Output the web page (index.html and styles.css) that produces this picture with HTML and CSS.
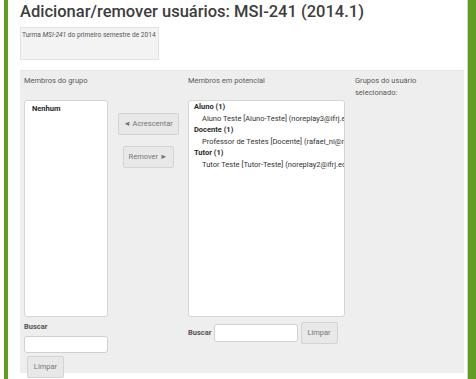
FILE: index.html
```html
<!DOCTYPE html>
<html lang="pt">
<head>
<meta charset="utf-8">
<title>Adicionar/remover usuários</title>
<link rel="stylesheet" href="styles.css">
</head>
<body>
<div class="frame">
  <div class="main">
    <h2 class="title">Adicionar/remover usuários: MSI-241 (2014.1)</h2>
    <div class="desc">Turma <i>MSI-241</i> do primeiro semestre de 2014</div>
    <div class="panel">
      <div class="col col-members">
        <div class="head">Membros do grupo</div>
        <div class="list list-left">
          <div class="group">Nenhum</div>
        </div>
        <div class="search-label">Buscar</div>
        <input class="input input-left" type="text">
        <div><button class="btn btn-clear-left">Limpar</button></div>
      </div>
      <div class="col col-buttons">
        <button class="btn btn-add">&#9668; Acrescentar</button>
        <button class="btn btn-remove">Remover &#9658;</button>
      </div>
      <div class="col col-potential">
        <div class="head">Membros em potencial</div>
        <div class="list list-right">
          <div class="group">Aluno (1)</div>
          <div class="opt">Aluno Teste [Aluno-Teste] (noreplay3@ifrj.edu.br)</div>
          <div class="group">Docente (1)</div>
          <div class="opt">Professor de Testes [Docente] (rafael_ni@msn.com)</div>
          <div class="group">Tutor (1)</div>
          <div class="opt">Tutor Teste [Tutor-Teste] (noreplay2@ifrj.edu.br)</div>
        </div>
        <div class="search-row">
          <span class="search-label inline">Buscar</span>
          <input class="input input-right" type="text">
          <button class="btn btn-clear-right">Limpar</button>
        </div>
      </div>
      <div class="col col-groups">
        <div class="head">Grupos do usuário selecionado:</div>
      </div>
    </div>
  </div>
</div>
</body>
</html>
```

FILE: styles.css
```css
html, body {
  margin: 0;
  padding: 0;
  background: #ffffff;
}
body {
  width: 476px;
  height: 379px;
  overflow: hidden;
  font-family: Roboto, "Noto Sans", sans-serif;
  color: #333;
}
.frame {
  margin-left: 4px;
  border-left: 4px solid #5f9e1e;
  border-right: 8px solid #5f9e1e;
  height: 379px;
  box-sizing: border-box;
}
.main {
  height: 100%;
  box-sizing: border-box;
  padding-left: 12px;
  padding-right: 3px;
  border-right: 1px solid #c9cfdc;
}
.title {
  margin: 0;
  padding-top: 2px;
  font-size: 16.5px;
  font-weight: 500;
  line-height: 20px;
  color: #3d3d3d;
  white-space: nowrap;
}
.desc {
  margin-top: 5px;
  width: 139px;
  height: 33px;
  box-sizing: border-box;
  background: #f3f3f3;
  border: 1px solid #e2e2e2;
  padding: 3px 1px;
  font-size: 6.6px;
  line-height: 9px;
  color: #555;
  white-space: nowrap;
}
.panel {
  margin-top: 10px;
  height: 303px;
  box-sizing: border-box;
  background: #eeeeee;
  border-top: 1px solid #e6e6e6;
  padding: 4px 0 0 4px;
  display: flex;
  align-items: flex-start;
}
.col {
  display: flex;
  flex-direction: column;
}
.head {
  font-size: 7.5px;
  line-height: 12px;
  height: 24px;
  margin-bottom: 1px;
  color: #5a5a5a;
}
.col-members {
  width: 84px;
}
.col-buttons {
  width: 80px;
  align-items: center;
  padding-top: 38px;
  gap: 11px;
}
.col-potential {
  width: 157px;
}
.col-groups {
  margin-left: 10px;
  width: 100px;
}
.list {
  height: 217px;
  box-sizing: border-box;
  background: #ffffff;
  border: 1px solid #d6d6d6;
  border-radius: 3px;
  overflow: hidden;
  font-size: 7.5px;
  line-height: 11.5px;
  white-space: nowrap;
}
.list-left {
  padding: 2px 7px;
}
.list-right {
  padding: 0 5px;
}
.group {
  font-weight: 700;
  color: #2a2a2a;
}
.opt {
  padding-left: 8px;
  color: #333;
}
.btn {
  font-family: Roboto, "Noto Sans", sans-serif;
  font-size: 7.5px;
  color: #777;
  background: #e8e8e8;
  border: 1px solid #d4d4d4;
  border-radius: 2px;
  padding: 0;
  height: 22px;
  box-sizing: border-box;
  line-height: 20px;
}
.btn-add {
  width: 61px;
}
.btn-remove {
  width: 51px;
}
.search-label {
  font-size: 7.5px;
  font-weight: 700;
  color: #555;
  line-height: 10px;
  margin-top: 5px;
}
.search-label.inline {
  margin-top: 0;
  margin-right: 2px;
}
.input {
  width: 84px;
  height: 17px;
  box-sizing: border-box;
  background: #fff;
  border: 1px solid #d0d0d0;
  border-radius: 3px;
  margin: 4px 0 0 0;
  padding: 0;
}
.btn-clear-left {
  width: 37px;
  margin: 3px 0 0 3px;
}
.search-row {
  display: flex;
  align-items: center;
  margin-top: 5px;
}
.input-right {
  height: 18px;
  margin: 0;
}
.btn-clear-right {
  width: 37px;
  margin-left: 3px;
}
```
